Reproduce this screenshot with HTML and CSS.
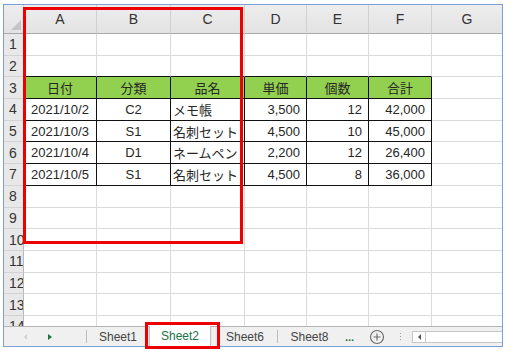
FILE: index.html
```html
<!DOCTYPE html>
<html lang="ja">
<head>
  <meta charset="UTF-8" />
  <title>Sheet2</title>
  <link rel="stylesheet" href="styles.css">
</head>
<body>
  <div class="book">
    <div class="sheet">
      <table class="grid">
        <colgroup>
          <col class="c-row"><col class="c-a"><col class="c-b"><col class="c-c"><col class="c-d"><col class="c-e"><col class="c-f"><col class="c-g">
        </colgroup>
        <tr class="head">
          <th class="corner"><span class="tri"></span></th>
          <th>A</th><th>B</th><th>C</th><th>D</th><th>E</th><th>F</th><th>G</th>
        </tr>
        <tr><th class="num">1</th><td></td><td></td><td></td><td></td><td></td><td></td><td></td></tr>
        <tr><th class="num">2</th><td class="top"></td><td class="top"></td><td class="top"></td><td class="top"></td><td class="top"></td><td class="top"></td><td></td></tr>
        <tr><th class="num">3</th><td class="hd">日付</td><td class="hd">分類</td><td class="hd">品名</td><td class="hd">単価</td><td class="hd">個数</td><td class="hd">合計</td><td></td></tr>
        <tr><th class="num">4</th><td class="d mid">2021/10/2</td><td class="d mid">C2</td><td class="d">メモ帳</td><td class="d r">3,500</td><td class="d r">12</td><td class="d r">42,000</td><td></td></tr>
        <tr><th class="num">5</th><td class="d mid">2021/10/3</td><td class="d mid">S1</td><td class="d">名刺セット</td><td class="d r">4,500</td><td class="d r">10</td><td class="d r">45,000</td><td></td></tr>
        <tr><th class="num">6</th><td class="d mid">2021/10/4</td><td class="d mid">D1</td><td class="d">ネームペン</td><td class="d r">2,200</td><td class="d r">12</td><td class="d r">26,400</td><td></td></tr>
        <tr><th class="num">7</th><td class="d mid">2021/10/5</td><td class="d mid">S1</td><td class="d">名刺セット</td><td class="d r">4,500</td><td class="d r">8</td><td class="d r">36,000</td><td></td></tr>
        <tr><th class="num">8</th><td></td><td></td><td></td><td></td><td></td><td></td><td></td></tr>
        <tr><th class="num">9</th><td></td><td></td><td></td><td></td><td></td><td></td><td></td></tr>
        <tr><th class="num">10</th><td></td><td></td><td></td><td></td><td></td><td></td><td></td></tr>
        <tr><th class="num">11</th><td></td><td></td><td></td><td></td><td></td><td></td><td></td></tr>
        <tr><th class="num">12</th><td></td><td></td><td></td><td></td><td></td><td></td><td></td></tr>
        <tr><th class="num">13</th><td></td><td></td><td></td><td></td><td></td><td></td><td></td></tr>
        <tr><th class="num">14</th><td></td><td></td><td></td><td></td><td></td><td></td><td></td></tr>
      </table>
    </div>

    <div class="tabbar">
      <div class="nav">
        <span class="arrow prev"></span>
        <span class="arrow next"></span>
      </div>
      <div class="tab t1">Sheet1</div>
      <div class="tab active">Sheet2</div>
      <div class="tab t6">Sheet6</div>
      <div class="tab t8">Sheet8</div>
      <div class="more">...</div>
      <div class="add">
        <svg width="16" height="16" viewBox="0 0 16 16">
          <circle cx="8" cy="8" r="6.5" fill="none" stroke="#6f6f6f" stroke-width="1.2"/>
          <path d="M8 4.5v7M4.5 8h7" stroke="#6f6f6f" stroke-width="1.2"/>
        </svg>
      </div>
      <div class="grip"><i></i><i></i><i></i></div>
      <div class="hscroll">
        <span class="sbtn"><span class="arrow left"></span></span>
        <span class="track"></span>
      </div>
    </div>

    <!-- annotation boxes -->
    <div class="mark range"></div>
    <div class="mark tabmark"></div>
  </div>
</body>
</html>
```

FILE: styles.css
```css
body {
  margin: 0;
  padding: 4px 3px;
  background: #fff;
  font-family: "Liberation Sans", "Noto Sans CJK JP", sans-serif;
}
.book {
  width: 498px;
  height: 341px;
  border: 1px solid #7c9fd6;
  display: flex;
  flex-direction: column;
}
.sheet {
  height: 322px;
  overflow: hidden;
}
.grid {
  table-layout: fixed;
  border-collapse: separate;
  border-spacing: 0;
  width: 498px;
  font-size: 13px;
  color: #262626;
}
.c-row { width: 20px; }
.c-a { width: 73px; }
.c-b { width: 74px; }
.c-c { width: 74px; }
.c-d { width: 62px; }
.c-e { width: 62px; }
.c-f { width: 63px; }
.c-g { width: 70px; }

.grid td, .grid th {
  box-sizing: border-box;
  padding: 0;
  height: 21.7px;
  border-right: 1px solid #dadada;
  border-bottom: 1px solid #dadada;
  white-space: nowrap;
  overflow: hidden;
  font-weight: normal;
}
.head th {
  height: 29px;
  background: linear-gradient(#ededed, #e3e3e3);
  border-right: 1px solid #d0d0d0;
  border-bottom: 1px solid #a8a8a8;
  color: #333;
  font-size: 14px;
  text-align: center;
}
.head th:last-child { border-right: none; }
.corner {
  position: relative;
}
.tri {
  position: absolute;
  right: 2px;
  bottom: 3px;
  width: 10px;
  height: 10px;
  background: #c4c4c4;
  clip-path: polygon(100% 0, 100% 100%, 0 100%);
}
.grid th.num {
  background: #e8e8e8;
  border-right: 1px solid #b9b9b9;
  border-bottom: 1px solid #d2d2d2;
  color: #333;
  font-size: 14px;
  text-align: left;
  padding-left: 5px;
}
.grid td:last-child { border-right: none; }

.grid td.top { border-bottom-color: #111; }
.grid td.hd {
  background: #92d050;
  border-right-color: #111;
  border-bottom-color: #111;
  text-align: center;
}
.grid td.d {
  border-right-color: #111;
  border-bottom-color: #111;
  padding-left: 2px;
}
.grid td.mid { text-align: center; padding-left: 0; }
.grid td.r { text-align: right; padding-right: 6px; }

/* sheet tabs */
.tabbar {
  height: 19px;
  border-top: 1px solid #b4b4b4;
  background: #f0f0f0;
  display: flex;
  align-items: stretch;
  font-size: 12px;
  color: #444;
}
.nav {
  width: 82px;
  border-right: 1px solid #bdbdbd;
  margin: 3px 0;
  display: flex;
  align-items: center;
}
.arrow {
  width: 0;
  height: 0;
  border-top: 3px solid transparent;
  border-bottom: 3px solid transparent;
}
.prev {
  margin-left: 20px;
  border-right: 3px solid #cfcfcf;
}
.next {
  margin-left: 21px;
  border-left: 4px solid #217346;
}
.tab {
  display: flex;
  align-items: center;
  justify-content: center;
}
.t1 { width: 62px; }
.active {
  width: 60px;
  margin-top: -1px;
  background: #fff;
  color: #217346;
  border-left: 1px solid #c3c3c3;
  border-right: 1px solid #c3c3c3;
  box-shadow: 0 1px 1px #c9c9c9;
}
.t6 {
  width: 64px;
  border-right: 1px solid #bdbdbd;
  margin: 3px 0;
  padding-left: 2px;
}
.t8 { width: 63px; }
.more {
  width: 24px;
  color: #217346;
  font-weight: bold;
  font-size: 11px;
  display: flex;
  align-items: center;
  padding-left: 4px;
  box-sizing: border-box;
}
.add {
  width: 24px;
  display: flex;
  align-items: center;
  justify-content: center;
}
.grip {
  width: 22px;
  display: flex;
  flex-direction: column;
  align-items: center;
  justify-content: center;
  gap: 2px;
}
.grip i {
  width: 1px;
  height: 1px;
  background: #9a9a9a;
}
.hscroll {
  flex: 1;
  display: flex;
  margin: 4px 0 3px;
  margin-left: 1px;
  background: #fff;
  border: 1px solid #c6c6c6;
  border-right: none;
}
.sbtn {
  width: 12px;
  border-right: 1px solid #c6c6c6;
  display: flex;
  align-items: center;
  justify-content: center;
}
.left { border-right: 3px solid #555; }
.track { flex: 1; }

/* red annotation boxes */
.mark {
  position: absolute;
  border: 3px solid #ee0000;
  box-sizing: border-box;
}
.range {
  left: 23px;
  top: 7px;
  width: 220px;
  height: 237px;
}
.tabmark {
  left: 145px;
  top: 322px;
  width: 75px;
  height: 27px;
}
```
